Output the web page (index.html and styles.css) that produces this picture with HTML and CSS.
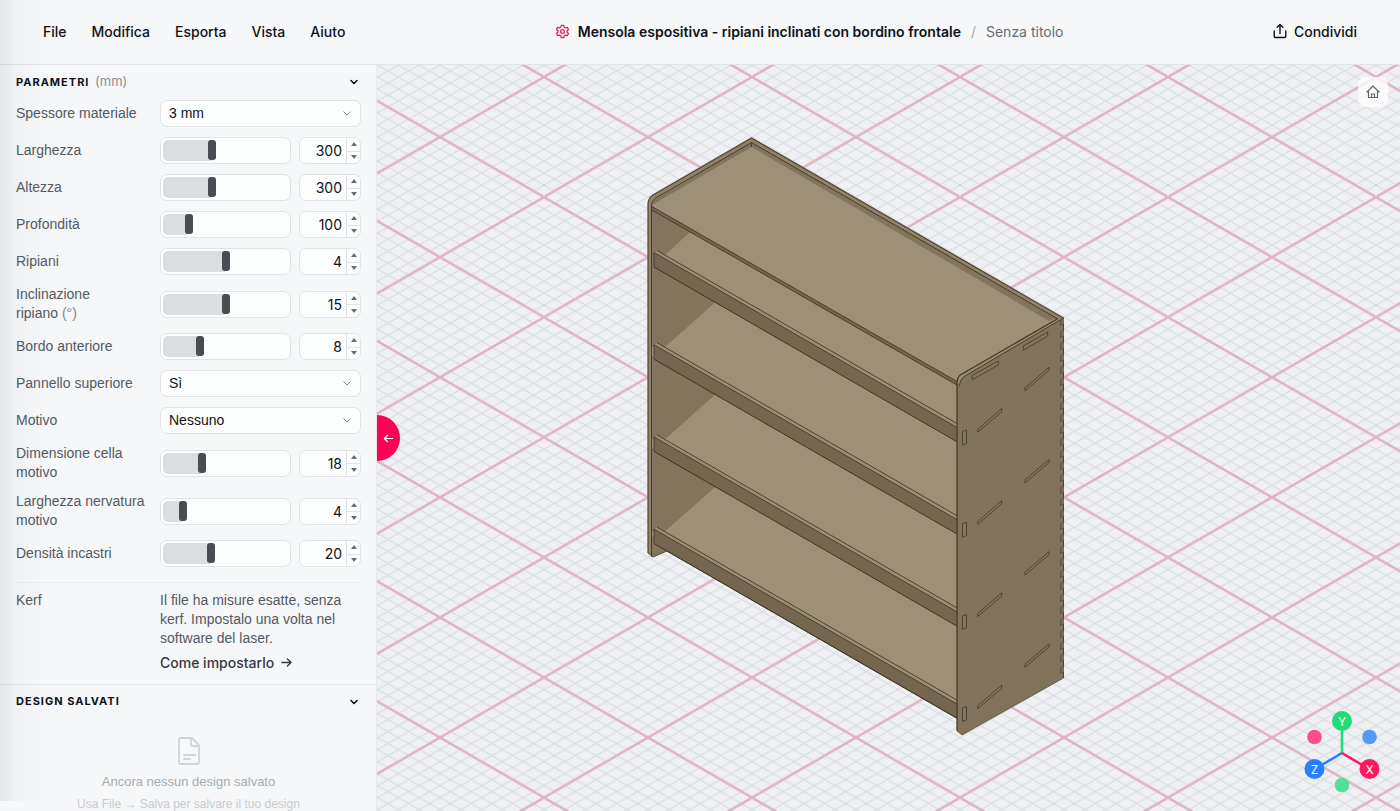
FILE: index.html
```html
<!DOCTYPE html>
<html lang="it">
<head>
<meta charset="utf-8">
<title>Mensola espositiva</title>
<link rel="stylesheet" href="styles.css">
</head>
<body>
<header class="topbar">
  <nav class="menu" aria-label="Menu principale">
    <button type="button">File</button>
    <button type="button">Modifica</button>
    <button type="button">Esporta</button>
    <button type="button">Vista</button>
    <button type="button">Aiuto</button>
  </nav>
  <div class="doc">
    <svg class="doc-icon" viewBox="0 0 16 16" fill="none" stroke="currentColor" stroke-width="1.4" stroke-linejoin="round"><path d="M6.700 1.400h2.600l.5 2 1.300.8 2-.6 1.300 2.300-1.500 1.400v1.500l1.500 1.300-1.300 2.300-2-.6-1.300.8-.5 2H6.700l-.5-2-1.300-.8-2 .6-1.300-2.300 1.500-1.300V7.300L1.600 5.900l1.300-2.300 2 .6 1.300-.8z"/><circle cx="8" cy="8" r="2"/></svg>
    <h1>Mensola espositiva - ripiani inclinati con bordino frontale</h1>
    <span class="slash">/</span>
    <span class="untitled">Senza titolo</span>
  </div>
  <button type="button" class="share">
    <svg viewBox="0 0 14 16" fill="none" stroke="currentColor" stroke-width="1.4" stroke-linecap="round" stroke-linejoin="round"><path d="M1.200 8v5q0 1.500 1.500 1.500h8.600q1.500 0 1.500-1.500V8M7 10.500V1.500M4.200 4.200 7 1.400l2.800 2.800"/></svg>
    Condividi
  </button>
</header>
<div class="workspace">
  <aside class="sidebar">
    <section class="params">
      <h2><button type="button" class="section-head"><span>PARAMETRI <small>(mm)</small></span><svg viewBox="0 0 10 10" fill="none" stroke="currentColor" stroke-width="1.600" stroke-linecap="round" stroke-linejoin="round"><path d="M2 3.500 5 6.500 8 3.500"/></svg></button></h2>
      <div class="rows">
        <div class="row"><label for="thickness">Spessore materiale</label>
          <div class="select"><select id="thickness"><option>3 mm</option></select><svg viewBox="0 0 10 10"><path d="M1.500 3.500 5 7 8.500 3.500"/></svg></div></div>
        <div class="row"><label for="width">Larghezza</label>
          <div class="range"><input type="range" aria-label="Larghezza" min="50" max="700" value="300" style="--fill:39%">
          <div class="number"><input type="number" id="width" value="300"><div class="steps"><button type="button" aria-label="Aumenta"></button><button type="button" aria-label="Riduci"></button></div></div></div></div>
        <div class="row"><label for="height">Altezza</label>
          <div class="range"><input type="range" aria-label="Altezza" min="50" max="700" value="300" style="--fill:39%">
          <div class="number"><input type="number" id="height" value="300"><div class="steps"><button type="button" aria-label="Aumenta"></button><button type="button" aria-label="Riduci"></button></div></div></div></div>
        <div class="row"><label for="depth">Profondità</label>
          <div class="range"><input type="range" aria-label="Profondità" min="40" max="360" value="100" style="--fill:20%">
          <div class="number"><input type="number" id="depth" value="100"><div class="steps"><button type="button" aria-label="Aumenta"></button><button type="button" aria-label="Riduci"></button></div></div></div></div>
        <div class="row"><label for="shelves">Ripiani</label>
          <div class="range"><input type="range" aria-label="Ripiani" min="1" max="7" value="4" style="--fill:50%">
          <div class="number"><input type="number" id="shelves" value="4"><div class="steps"><button type="button" aria-label="Aumenta"></button><button type="button" aria-label="Riduci"></button></div></div></div></div>
        <div class="row"><label for="tilt">Inclinazione<br>ripiano <span class="unit">(°)</span></label>
          <div class="range"><input type="range" aria-label="Inclinazione ripiano" min="0" max="30" value="15" style="--fill:50%">
          <div class="number"><input type="number" id="tilt" value="15"><div class="steps"><button type="button" aria-label="Aumenta"></button><button type="button" aria-label="Riduci"></button></div></div></div></div>
        <div class="row"><label for="lip">Bordo anteriore</label>
          <div class="range"><input type="range" aria-label="Bordo anteriore" min="4" max="18" value="8" style="--fill:29%">
          <div class="number"><input type="number" id="lip" value="8"><div class="steps"><button type="button" aria-label="Aumenta"></button><button type="button" aria-label="Riduci"></button></div></div></div></div>
        <div class="row"><label for="top">Pannello superiore</label>
          <div class="select"><select id="top"><option>Sì</option></select><svg viewBox="0 0 10 10"><path d="M1.500 3.500 5 7 8.500 3.500"/></svg></div></div>
        <div class="row"><label for="pattern">Motivo</label>
          <div class="select"><select id="pattern"><option>Nessuno</option></select><svg viewBox="0 0 10 10"><path d="M1.500 3.500 5 7 8.500 3.500"/></svg></div></div>
        <div class="row"><label for="cell">Dimensione cella<br>motivo</label>
          <div class="range"><input type="range" aria-label="Dimensione cella motivo" min="8" max="41" value="18" style="--fill:31%">
          <div class="number"><input type="number" id="cell" value="18"><div class="steps"><button type="button" aria-label="Aumenta"></button><button type="button" aria-label="Riduci"></button></div></div></div></div>
        <div class="row"><label for="rib">Larghezza nervatura<br>motivo</label>
          <div class="range"><input type="range" aria-label="Larghezza nervatura motivo" min="2" max="17" value="4" style="--fill:15%">
          <div class="number"><input type="number" id="rib" value="4"><div class="steps"><button type="button" aria-label="Aumenta"></button><button type="button" aria-label="Riduci"></button></div></div></div></div>
        <div class="row"><label for="joints">Densità incastri</label>
          <div class="range"><input type="range" aria-label="Densità incastri" min="5" max="45" value="20" style="--fill:38%">
          <div class="number"><input type="number" id="joints" value="20"><div class="steps"><button type="button" aria-label="Aumenta"></button><button type="button" aria-label="Riduci"></button></div></div></div></div>
      </div>
      <div class="kerf">
        <span>Kerf</span>
        <div>
          <p>Il file ha misure esatte, senza kerf. Impostalo una volta nel software del laser.</p>
          <a href="#kerf">Come impostarlo <svg viewBox="0 0 12 12" fill="none" stroke="currentColor" stroke-width="1.400" stroke-linecap="round" stroke-linejoin="round"><path d="M1 6h10M7 2.200 11 6 7 9.800"/></svg></a>
        </div>
      </div>
    </section>
    <section class="saved">
      <h2><button type="button" class="section-head"><span>DESIGN SALVATI</span><svg viewBox="0 0 10 10" fill="none" stroke="currentColor" stroke-width="1.600" stroke-linecap="round" stroke-linejoin="round"><path d="M2 3.500 5 6.500 8 3.500"/></svg></button></h2>
      <div class="empty">
        <svg viewBox="0 0 24 30" fill="none" stroke="currentColor" stroke-width="1.800" stroke-linejoin="round" stroke-linecap="round"><path d="M3 2h11q1 0 2 1l5 5q1 1 1 2v16q0 2-2 2H3.500Q2 28 2 26.500V3.500Q2 2 3.500 2M14 2.500V8q0 2 2 2h5.500M7 19h11M7 23h6"/></svg>
        <p>Ancora nessun design salvato</p>
        <p class="hint">Usa File → Salva per salvare il tuo design</p>
      </div>
    </section>
  </aside>
  <main class="viewport">
    <svg class="scene" viewBox="377 65 1023 746" preserveAspectRatio="xMidYMid slice" role="img" aria-label="Anteprima 3D">
      <defs>
        <pattern id="minor" patternUnits="userSpaceOnUse" x="544" y="77" width="20.800" height="12.010"><path d="M-1-.577 21.800 12.587M-1 12.587 21.800-.577" stroke="#d8dadf" stroke-width="1" fill="none"/></pattern>
        <pattern id="major" patternUnits="userSpaceOnUse" x="544" y="77" width="208" height="120.100"><path d="M-4-2.310 212 122.410M-4 122.410 212-2.310M-4 2.310 4-2.310M204 122.410l8-4.620M204-2.310l8 4.620M-4 117.790l8 4.620" stroke="#e0b3c3" stroke-width="2.400" fill="none"/></pattern>
        <pattern id="teeth" patternUnits="userSpaceOnUse" x="1060" y="330" width="4" height="12"><path d="M4 .2.500 1.500V7.500L4 6" stroke="#544a38" fill="#786a52" stroke-width=".8"/></pattern>
        <g id="lipShape">
          <path d="M654 252.500 656 250.500 957 424.500V441.500L654 267Z" fill="#75674f"/>
          <path d="M654 252.500 657 250.500 957 423V427.500Z" fill="#9b8d73"/>
          <path d="M657 250.500 957 423.500M654 252.500 957 427.500M654 252.500V266.500" stroke="#463b28" stroke-width=".9" fill="none"/>
          <path d="M654 267 957 441.800" stroke="#3d3321" stroke-width="1" fill="none"/>
        </g>
        <g id="slots" fill="#84765d" stroke="#40372a" stroke-width=".8">
          <path d="M1025 387.700 1049 367.300V370.300L1025 390.700ZM977.700 429.300 1001.700 408.500V411.700L977.700 432.200ZM962.500 431.500 966.500 430V443.300L962.500 445Z"/>
        </g>
        <path id="inside" d="M651 263 715 302.500 665 347H651Z" fill="#83755c"/>
      </defs>
      <rect x="-1000" y="-1000" width="4000" height="3000" fill="#eef0f3"/>
      <rect x="-1000" y="-1000" width="4000" height="3000" fill="url(#minor)"/>
      <rect x="-1000" y="-1000" width="4000" height="3000" fill="url(#major)"/>
      <path d="M648 553V204Q648 198 653 195L751.500 138 1063.500 318V678L962 735 957 731V718L667 551 653 557Z" fill="#9e9077"/>
      <path d="M651 208 691 231 665 255V300H651Z" fill="#83755c"/>
      <use href="#inside"/><use href="#inside" y="92.200"/><use href="#inside" y="184.400"/>
      <path d="M651 535 668 550 653 557H651Z" fill="#83755c"/>
      <use href="#lipShape"/><use href="#lipShape" y="92.200"/><use href="#lipShape" y="184.400"/><use href="#lipShape" y="276.600"/>
      <path d="M651 206 957 381.500V385L651 209.500Z" fill="#75674f" stroke="#40372a" stroke-width=".9"/>
      <path d="M651.500 204Q652 201 655 199.500L751.500 142 1057 318 1049 321 751.500 147 652 205Z" fill="#83755c"/>
      <path d="M648 204Q648 198 653 195L751.500 138 1063.500 318 1057 318.500 751.500 142.500 655 198.500Q651.500 201 651.500 205V556L648 553Z" fill="#908268"/>
      <path d="M651.500 556V205Q651.500 201 655 198.500L751.500 142.500 1057 318.500M751.500 142.500V147" fill="none" stroke="#463c2a" stroke-width="1"/>
      <path d="M648 553V204Q648 198 653 195L751.500 138 1063.500 318" fill="none" stroke="#514733" stroke-width="1.200"/>
      <path d="M648 553 653 557 667 551 957 718" fill="none" stroke="#40372a" stroke-width=".8"/>
      <path d="M957 383Q957 377 961 374.500L1058 318.500 1063.500 318V678L962 735 957 731Z" fill="#81735b"/>
      <path d="M957 383Q957 377 961 374.500L1058 318.500 1063.500 318 965 376Q960 379 960 385L957 383Z" fill="#998b70"/>
      <path d="M957 731V383Q957 377 961 374.500L1058 318.500" fill="none" stroke="#40372a" stroke-width="1.200"/>
      <path d="M959.500 386Q960 379 965 376L1063.500 318V678" fill="none" stroke="#40372a" stroke-width=".9"/>
      <path d="M1063.500 678 962 735 957 731" fill="none" stroke="#5e523e" stroke-width=".7"/>
      <rect x="1060" y="318" width="4" height="357" fill="url(#teeth)"/>
      <path d="M972.300 375.500 998.300 361V365L972.300 379.700ZM1023.300 346 1047.700 332V336L1023.300 350.300Z" fill="#84765d" stroke="#40372a" stroke-width=".8"/>
      <use href="#slots"/><use href="#slots" y="92.200"/><use href="#slots" y="184.400"/><use href="#slots" y="276.600"/>
    </svg>
    <button type="button" class="collapse" aria-label="Chiudi pannello"><svg viewBox="0 0 12 12" fill="none" stroke="currentColor" stroke-width="1.300" stroke-linecap="round" stroke-linejoin="round"><path d="M10.500 6h-9M5 2.500 1.500 6 5 9.500"/></svg></button>
    <button type="button" class="home" aria-label="Vista iniziale"><svg viewBox="0 0 14 14" fill="none" stroke="currentColor" stroke-width="1.200" stroke-linecap="round" stroke-linejoin="round"><path d="M1 7 7 1l6 6M2.500 6v6.500h9V6M5.500 12.500V9h3v3.500"/></svg></button>
    <svg class="gizmo" viewBox="0 0 76 84" role="img" aria-label="Assi X, Y, Z">
      <g stroke-width="2.600"><path d="M38 43V11" stroke="#22d97c"/><path d="M38 43 65 59" stroke="#ff1a60"/><path d="M38 43 11 59" stroke="#2680ff"/></g>
      <circle cx="38" cy="11" r="10" fill="#1fdb7c"/><circle cx="65.500" cy="59" r="10" fill="#ff1a60"/><circle cx="10.500" cy="59" r="10" fill="#2680ff"/>
      <circle cx="10.500" cy="27" r="7.300" fill="#fb4f88"/><circle cx="65.500" cy="27" r="7.300" fill="#5499f6"/><circle cx="38" cy="75" r="7.300" fill="#52e096"/>
      <text x="38" y="16">Y</text><text x="65.500" y="64">X</text><text x="10.500" y="64">Z</text>
    </svg>
  </main>
</div>
<div class="edge-shade"></div>
</body>
</html>
```
FILE: styles.css
```css
* { box-sizing: border-box; }
body {
  margin: 0;
  height: 100vh;
  display: flex;
  flex-direction: column;
  overflow: hidden;
  background: #f5f7f9;
  color: #101216;
  font: 14px/19px Inter, "Liberation Sans", sans-serif;
}
button, input, select { font: inherit; color: inherit; }
button { border: 0; padding: 0; background: none; }
h1, h2, p { margin: 0; font: inherit; }
svg { display: block; flex: none; }

.topbar {
  flex: none;
  height: 65px;
  padding: 0 43px 2px;
  display: flex;
  align-items: center;
  justify-content: space-between;
  border-bottom: 1px solid #e1e3e7;
  font-weight: 500;
}
.menu { display: flex; gap: 25px; }
.doc { display: flex; align-items: center; gap: 8px; }
.doc-icon { width: 15px; height: 15px; color: #ea1c60; }
.doc h1 { font-weight: 600; }
.slash { color: #a3a6ab; font-weight: 400; padding: 0 2px; }
.untitled { color: #686c72; font-weight: 400; }
.share { display: flex; align-items: center; gap: 7px; }
.share svg { width: 14px; height: 16px; }

.workspace { flex: 1; min-height: 0; display: flex; }
.sidebar {
  width: 377px;
  flex: none;
  overflow: hidden;
  border-right: 1px solid #e7e9ed;
}
.params, .saved { padding: 0 15px 0 16px; }
.section-head {
  width: 100%;
  height: 35px;
  display: flex;
  align-items: center;
  justify-content: space-between;
  padding: 0 2px 2px 0;
  font-size: 11px;
  font-weight: 700;
  letter-spacing: 1px;
}
.section-head small { margin-left: 2px; font-size: 13px; font-weight: 400; color: #8b8e94; letter-spacing: 0; }
.section-head svg { width: 10px; height: 10px; }

.rows { display: flex; flex-direction: column; gap: 10px; }
.row, .kerf {
  display: grid;
  grid-template-columns: 136px minmax(0, 1fr);
  gap: 8px;
  color: #55595f;
  font-family: "Liberation Sans", sans-serif;
}
.row { align-items: center; }
.unit { color: #83878c; }
.select { position: relative; color: #101216; }
.select select {
  display: block;
  width: 100%;
  height: 27px;
  padding: 0 8px;
  appearance: none;
  border: 1px solid #e0e2e6;
  border-radius: 7px;
  background: #fdfefe;
}
.select svg {
  position: absolute;
  right: 9px;
  top: 8px;
  width: 10px;
  height: 10px;
  fill: none;
  stroke: #888b90;
  pointer-events: none;
}
.range { display: flex; gap: 8px; }
.range input[type="range"] {
  flex: 1;
  width: 0;
  min-width: 0;
  height: 27px;
  margin: 0;
  padding: 2px;
  appearance: none;
  border: 1px solid #e0e2e6;
  border-radius: 7px;
  background: #fdfefe;
}
.range input::-webkit-slider-runnable-track {
  height: 21px;
  border-radius: 5px;
  background: linear-gradient(90deg, #dcdde1 var(--fill), transparent var(--fill));
}
.range input::-webkit-slider-thumb {
  appearance: none;
  width: 8px;
  height: 20px;
  border-radius: 3px;
  background: #4b4c52;
}
.number {
  flex: none;
  width: 62px;
  height: 27px;
  display: flex;
  overflow: hidden;
  border: 1px solid #e0e2e6;
  border-radius: 7px;
  background: #fdfefe;
  color: #101216;
}
.number input {
  flex: 1;
  min-width: 0;
  padding: 0 4px 0 0;
  border: 0;
  background: none;
  text-align: right;
  font-family: Inter, sans-serif;
  appearance: textfield;
}
.number input::-webkit-inner-spin-button { display: none; }
.steps {
  width: 14px;
  display: grid;
  grid-template-rows: 1fr 1fr;
  border-left: 1px solid #e0e2e6;
}
.steps button { display: grid; place-items: center; }
.steps button + button { border-top: 1px solid #e0e2e6; }
.steps button::before {
  content: "";
  border: 3px solid transparent;
  border-top-width: 0;
  border-bottom: 4px solid #696c71;
}
.steps button + button::before { transform: rotate(180deg); }

.kerf {
  margin-top: 15px;
  padding: 8px 0 12px;
  border-top: 1px solid #e9ebee;
}
.kerf a {
  display: flex;
  align-items: center;
  gap: 7px;
  margin-top: 5px;
  color: #34383d;
  font-family: Inter, sans-serif;
  font-weight: 500;
  text-decoration: none;
}
.kerf a svg { width: 11px; height: 11px; }
.saved { border-top: 1px solid #e1e3e7; }
.empty {
  display: flex;
  flex-direction: column;
  align-items: center;
  padding-top: 16px;
  color: #a9acb0;
  font: 13px/15px "Liberation Sans", sans-serif;
  white-space: nowrap;
}
.empty svg { width: 24px; height: 30px; color: #d1d4d7; margin-bottom: 8px; }
.empty .hint { margin-top: 8px; font-size: 12px; color: #c8cbce; }

.viewport { position: relative; flex: 1; min-width: 0; overflow: hidden; }
.scene { width: 100%; height: 100%; }
.collapse {
  position: absolute;
  left: 0;
  top: 50%;
  width: 23px;
  height: 46px;
  margin-top: -23px;
  display: grid;
  place-items: center;
  border-radius: 0 23px 23px 0;
  background: #ff0055;
  color: #fff;
}
.collapse svg { width: 11px; height: 11px; }
.home {
  position: absolute;
  top: 12px;
  right: 12px;
  width: 30px;
  height: 30px;
  display: grid;
  place-items: center;
  border-radius: 8px;
  background: rgba(255, 255, 255, .75);
  color: #64676c;
}
.home svg { width: 14px; height: 14px; }
.gizmo { position: absolute; right: 20px; bottom: 17px; width: 76px; height: 84px; fill: none; }
.gizmo text { fill: #fff; font-size: 12px; text-anchor: middle; }
.edge-shade {
  position: absolute;
  inset: 0 auto 10px 0;
  width: 44px;
  background: linear-gradient(90deg, rgba(60, 64, 70, .09), rgba(60, 64, 70, .03) 35%, transparent);
  pointer-events: none;
}
```
